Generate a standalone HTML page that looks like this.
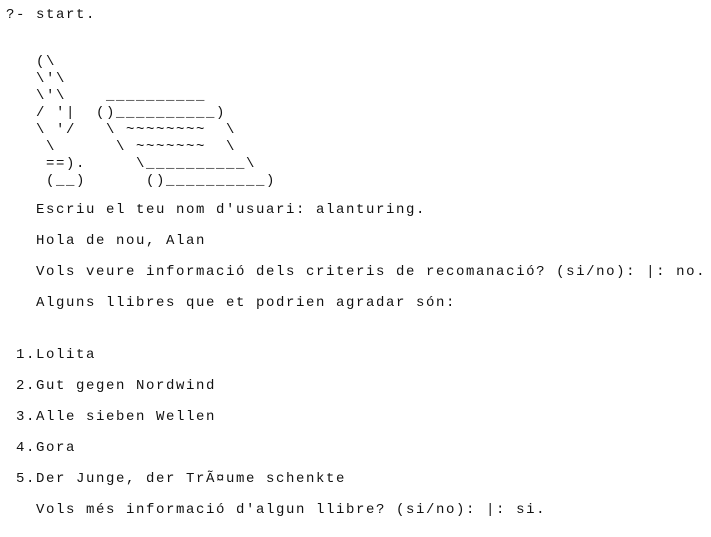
<!DOCTYPE html>
<html><head><meta charset="utf-8"><style>
body{margin:0;background:#fff;width:711px;height:537px;overflow:hidden;position:relative}
pre{position:absolute;margin:0;font-family:"Liberation Mono",monospace;font-size:14px;letter-spacing:1.6px;color:#111;line-height:17px;white-space:pre}
</style></head><body>
<pre style="left:6px;top:7px">?- start.</pre>
<pre style="left:6px;top:54px">   (\
   \'\
   \'\    __________
   / '|  ()__________)
   \ '/   \ ~~~~~~~~  \
    \      \ ~~~~~~~  \
    ==).     \__________\
    (__)      ()__________)</pre>
<pre style="left:36px;top:202px">Escriu el teu nom d'usuari: alanturing.</pre>
<pre style="left:36px;top:233px">Hola de nou, Alan</pre>
<pre style="left:36px;top:264px">Vols veure informació dels criteris de recomanació? (si/no): |: no.</pre>
<pre style="left:36px;top:295px">Alguns llibres que et podrien agradar són:</pre>
<pre style="left:16px;top:347px">1.Lolita</pre>
<pre style="left:16px;top:378px">2.Gut gegen Nordwind</pre>
<pre style="left:16px;top:409px">3.Alle sieben Wellen</pre>
<pre style="left:16px;top:440px">4.Gora</pre>
<pre style="left:16px;top:471px">5.Der Junge, der TrÃ¤ume schenkte</pre>
<pre style="left:36px;top:502px">Vols més informació d'algun llibre? (si/no): |: si.</pre>
</body></html>
